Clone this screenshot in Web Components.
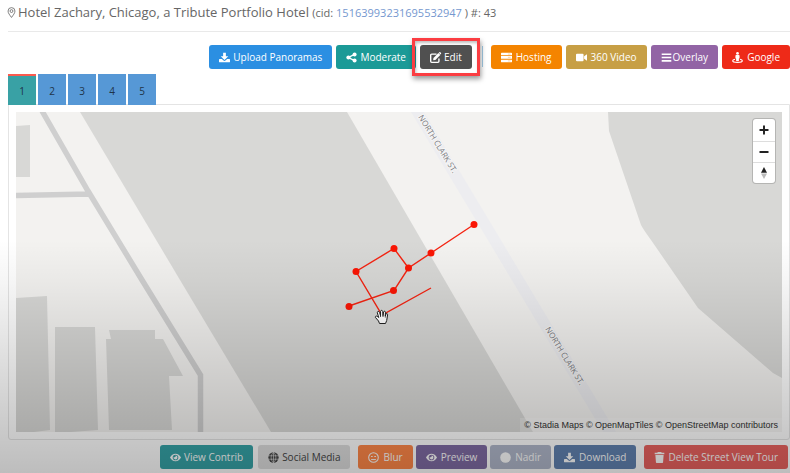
<!DOCTYPE html>
<html lang="en">
<head>
<meta charset="utf-8">
<title>Hotel Zachary tour editor</title>
<style>
html { height: 100%; }
body { margin: 0; min-height: 100%; background: #fff; font-family: "Open Sans", sans-serif; color: #555; overflow-x: hidden; }
</style>
</head>
<body>
<tour-editor></tour-editor>
<script>
const ICONS = {
  pin: '<path fill="none" stroke="currentColor" stroke-width="1.2" d="M8 15.2C5.4 11.6 3 9 3 5.900a5 5 0 0 1 10 0C13 9 10.600 11.600 8 15.200Z"/><circle cx="8" cy="5.900" r="2.100" fill="none" stroke="currentColor" stroke-width="1.200"/>',
  download: '<path d="M6 1h4v5h3.500L8 11.500 2.500 6H6Z"/><path d="M1 10h3.200L6.600 12.400a2 2 0 0 0 2.800 0L11.800 10H15a1 1 0 0 1 1 1v3a1 1 0 0 1-1 1H1a1 1 0 0 1-1-1v-3a1 1 0 0 1 1-1Z"/>',
  share: '<circle cx="3.500" cy="8" r="3"/><circle cx="12.500" cy="3.500" r="2.900"/><circle cx="12.500" cy="12.500" r="2.900"/><path d="M12.500 3.500 3.500 8l9 4.500" fill="none" stroke="currentColor" stroke-width="2"/>',
  edit: '<path d="M9.500 3H2.500A1.500 1.500 0 0 0 1 4.500v9A1.500 1.500 0 0 0 2.500 15h9a1.500 1.500 0 0 0 1.500-1.500V9.500" fill="none" stroke="currentColor" stroke-width="2"/><path d="M5 8.700 12.200 1.500l2.800 2.800-7.200 7.200L4.600 12Z"/><path d="m12.700 1 1-.7c.4-.3.900-.3 1.300.1l1 1c.4.4.4.900.1 1.300l-.7 1Z"/>',
  server: '<path d="M1 1h14a1 1 0 0 1 1 1v2.200H0V2a1 1 0 0 1 1-1ZM0 5.600h16v4.200H0ZM0 11.200h16V14a1 1 0 0 1-1 1H1a1 1 0 0 1-1-1Z"/><path d="M10 3h4M10 7.700h4M10 13h4" stroke="#f9c07a" stroke-width="1"/>',
  video: '<path d="M1.500 2.500h8A1.500 1.500 0 0 1 11 4v8a1.500 1.500 0 0 1-1.500 1.500h-8A1.500 1.500 0 0 1 0 12V4a1.500 1.500 0 0 1 1.500-1.500ZM11.800 6.300 16 3.200v9.600l-4.200-3.100Z"/>',
  bars: '<path d="M1 2h14v2.200H1ZM1 6.900h14v2.200H1ZM1 11.800h14V14H1Z"/>',
  street: '<circle cx="8" cy="2" r="2"/><path d="M6 4.500h4a1 1 0 0 1 1 1V9l-1 .7V13H6V9.700L5 9V5.500a1 1 0 0 1 1-1Z"/><path d="M4.500 10.600C2.500 11 1 11.700 1 12.600c0 1.400 3.100 2.400 7 2.400s7-1 7-2.400c0-.9-1.500-1.600-3.500-2" fill="none" stroke="currentColor" stroke-width="1.700"/>',
  eye: '<path fill-rule="evenodd" d="M8 2.500c3.400 0 6.300 2 8 5.500-1.700 3.500-4.600 5.500-8 5.500S1.700 11.500 0 8c1.700-3.500 4.600-5.500 8-5.500Zm0 1.400a4.100 4.100 0 1 0 0 8.200 4.100 4.100 0 0 0 0-8.200Z"/><path d="M8 5.200A2.800 2.800 0 1 1 5.400 7 1.500 1.500 0 0 0 8 5.200Z"/>',
  globe: '<circle cx="8" cy="8" r="7.500"/><path d="M0 5.500h16M0 10.500h16M8 0v16M8 .5C3.500 4 3.500 12 8 15.500 12.500 12 12.500 4 8 .5Z" fill="none" stroke="#d6d6d6" stroke-width="1"/>',
  meh: '<circle cx="8" cy="8" r="7" fill="none" stroke="currentColor" stroke-width="1.500"/><path d="M4.500 11h7" stroke="currentColor" stroke-width="1.400"/><path d="M4.500 5.700h2.300v1.600H4.500ZM9.200 5.700h2.300v1.600H9.200Z"/>',
  circle: '<circle cx="8" cy="8" r="7.700"/>',
  trash: '<path d="M5.500 0h5l.7 1H15v2.200H1V1h3.800ZM2 4.300h12L13.200 15a1 1 0 0 1-1 1H3.800a1 1 0 0 1-1-1Z"/>',
  plus: '<path d="M8 3v10M3 8h10" fill="none" stroke="currentColor" stroke-width="2.600" stroke-linecap="round"/>',
  minus: '<path d="M3 8h10" fill="none" stroke="currentColor" stroke-width="2.600" stroke-linecap="round"/>',
  compass: '<path d="M8 0 12 7.500H4Z"/><path d="M4 8.800h8L8 16Z" fill="#bbb"/>'
};

function define(name, html, setup) {
  const template = document.createElement('template');
  template.innerHTML = html;
  customElements.define(name, class extends HTMLElement {
    constructor() {
      super();
      this.attachShadow({ mode: 'open' }).append(template.content.cloneNode(true));
    }
    connectedCallback() { if (setup) setup(this, this.shadowRoot); }
  });
}

define('ui-icon', `
<style>
:host { display: inline-flex; flex: none; width: 11px; height: 11px; }
svg { width: 100%; height: 100%; fill: currentColor; overflow: visible; }
</style>
<svg viewBox="0 0 16 16" aria-hidden="true"></svg>`,
(host, root) => { root.querySelector('svg').innerHTML = ICONS[host.getAttribute('name')]; });

define('tool-button', `
<style>
:host { display: inline-flex; position: relative; color: #fff; }
button { display: flex; align-items: center; gap: var(--icon-gap, 4px); height: 24px; padding: 0 10px; border: 0; border-radius: 3px;
  background: var(--fill); color: inherit; font: 10px/24px "Open Sans", sans-serif; white-space: nowrap; cursor: pointer; }
:host([strong]) button { font-weight: 500; }
:host([tight]) button { gap: 1px; }
:host([marked])::after { content: ""; position: absolute; inset: -7px -8px; border: 3px solid #fb3d42;
  box-shadow: 1px 3px 5px rgba(0,0,0,.4), inset 1px 2px 3px rgba(0,0,0,.25); pointer-events: none; }
</style>
<button type="button"><ui-icon></ui-icon><span><slot></slot></span></button>`,
(host, root) => {
  const icon = document.createElement('ui-icon');
  icon.setAttribute('name', host.getAttribute('icon'));
  root.querySelector('ui-icon').replaceWith(icon);
});

define('tool-bar', `
<style>
:host { display: flex; justify-content: flex-end; gap: 8px; }
</style>
<slot></slot>`);

define('tool-group', `
<style>:host { display: flex; gap: var(--gap, 4px); }</style><slot></slot>`);

define('page-title', `
<style>
:host { display: block; border-bottom: 1px solid #e9e9e9; }
h1 { display: flex; align-items: center; gap: 1px; margin: 0; height: 31px; padding-bottom: 7px; box-sizing: border-box;
  font-size: 13px; line-height: 24px; font-weight: 400; color: #666; white-space: nowrap; }
small { font-size: 11px; }
a { color: #7598cf; text-decoration: none; }
ui-icon { margin-left: -2px; }
</style>
<h1><ui-icon name="pin"></ui-icon><span>Hotel Zachary, Chicago, a Tribute Portfolio Hotel <small>(cid: <a href="#cid">15163993231695532947</a> ) #: 43</small></span></h1>`);

define('floor-tabs', `
<style>
:host { display: flex; gap: 2px; position: relative; }
button { width: 28px; height: 31px; padding: 2px 0 0; border: 0; background: #5698d6; color: #1f3448; font: 10px "Open Sans", sans-serif; }
button[aria-selected=true] { background: #39a1a5; border-top: 2px solid #fb5a4e; padding: 0; }
</style>
<button type="button" role="tab" aria-selected="true">1</button>
<button type="button" role="tab">2</button>
<button type="button" role="tab">3</button>
<button type="button" role="tab">4</button>
<button type="button" role="tab">5</button>`);

define('map-controls', `
<style>
:host { display: flex; flex-direction: column; width: 22px; border-radius: 3px; background: #fff; box-shadow: 0 0 0 1px rgba(0,0,0,.16); }
button { display: grid; place-items: center; height: 22px; padding: 0; border: 0; background: none; color: #222; }
button + button { border-top: 1px solid #ddd; height: 21px; }
ui-icon { width: 12px; height: 12px; }
</style>
<button type="button" aria-label="Zoom in"><ui-icon name="plus"></ui-icon></button>
<button type="button" aria-label="Zoom out"><ui-icon name="minus"></ui-icon></button>
<button type="button" aria-label="Reset north"><ui-icon name="compass"></ui-icon></button>`);

define('tour-map', `
<style>
:host { display: block; position: relative; }
svg { display: block; width: 100%; height: auto; }
text { font: 8px "Open Sans", sans-serif; fill: #77777c; stroke: #f5f5f5; stroke-width: 2px; paint-order: stroke; }
map-controls { position: absolute; top: 7px; right: 7px; }
footer { position: absolute; right: 0; bottom: 0; padding: 0 4px; background: rgba(255,255,255,.25);
  font: 9px/14px "Liberation Sans", sans-serif; color: #333; white-space: nowrap; }
</style>
<svg viewBox="16 112 766 320" role="img" aria-label="Map of North Clark Street with tour path">
  <path fill="#f3f2f0" d="M16 112h766v320H16Z"/>
  <g fill="#d8d8d6">
    <path d="M80 112H347L533 432H271L180 280Z"/>
    <path d="M608 112L609 131 641 225Q643 229 651 240L698 308 773 373 782 378V112Z"/>
    <path d="M16 126L30 125V177H16Z"/>
    <path d="M16 298L47 296 50 430 34 432H16Z"/>
    <path d="M55 327H95L98 430 71 432H55Z"/>
    <path d="M109 330H155V339H163L183 376H169L172 430H109L106 339H111Z"/>
  </g>
  <path fill="none" stroke="#cfcfcf" stroke-width="5.500" d="M42 111L88 191 142 280 200.500 375V432M16 195.500L90 194"/>
  <path fill="#ededf0" d="M411 112H424L616 432H603Z"/>
  <text transform="translate(418 117) rotate(58.500)">NORTH CLARK ST.</text>
  <text transform="translate(545 329) rotate(58.500)">NORTH CLARK ST.</text>
  <path fill="none" stroke="#f42412" stroke-width="1.400" d="M349 306L394 290.500 408.500 268 431 253 474 224.500M408.500 268L394 248.500 356 271.500 382 315 431 288"/>
  <g fill="#fa1605">
    <circle cx="349" cy="306.500" r="3.500"/><circle cx="393.500" cy="290.500" r="3.500"/><circle cx="408.500" cy="268" r="3.500"/>
    <circle cx="431" cy="253" r="3.500"/><circle cx="474" cy="224.500" r="3.500"/><circle cx="394" cy="248.500" r="3.500"/><circle cx="356" cy="271.500" r="3.500"/>
  </g>
  <path fill="#fff" stroke="#222" stroke-width="1" stroke-linejoin="round" d="M379.500 323.500L378.500 321 375.300 317.300C375.300 315.600 377 315.600 378.700 317.500L377.300 312.700C377.300 311 379 311 379.600 312.500L380.500 315.500V311.500C380.800 310 382.400 310 382.700 311.500L383 315.500 383.600 312C384.100 310.700 385.500 311 385.500 312.500L385.300 316 386 314C386.600 313 387.800 313.500 387.600 314.800L386.700 320.500 385.500 323.500Z"/>
  <path stroke="#222" stroke-width=".8" d="M380.500 315v2M383 315v2M385.300 315.500v2"/>
</svg>
<map-controls></map-controls>
<footer>© Stadia Maps © OpenMapTiles © OpenStreetMap contributors</footer>`);

define('tour-editor', `
<style>
:host { display: block; position: relative; min-height: 100vh; box-sizing: border-box; padding-left: 8px; }
:host::after { content: ""; position: absolute; inset: 240px 0 0; pointer-events: none;
  background: linear-gradient(rgba(0,0,0,0), rgba(0,0,0,.04) 18%, rgba(0,0,0,.26)); }
.top { margin-top: 13px; }
.divider { width: 1px; height: 21px; margin: 1px 0 0 6px; background: #a3cbe5; }
floor-tabs { margin-top: 5px; }
main { padding: 7px; border: 1px solid #e4e4e4; border-radius: 0 0 3px 3px; margin-top: -1px; }
.bottom { margin: 5px 2px 4px 0; }
.grey { color: #444; }
.snug { --icon-gap: 3px; }
</style>
<page-title></page-title>
<tool-bar class="top">
  <tool-group class="snug">
    <tool-button icon="download" style="--fill:#2b8fe2">Upload Panoramas</tool-button>
    <tool-button icon="share" style="--fill:#1b9a97">Moderate</tool-button>
    <tool-button icon="edit" marked style="--fill:#505050">Edit</tool-button>
    <div class="divider"></div>
  </tool-group>
  <tool-group>
    <tool-button icon="server" style="--fill:#f48400">Hosting</tool-button>
    <tool-button icon="video" style="--fill:#c79f45">360 Video</tool-button>
    <tool-button icon="bars" tight style="--fill:#9264a5">Overlay</tool-button>
    <tool-button icon="street" style="--fill:#ee2a18">Google</tool-button>
  </tool-group>
</tool-bar>
<floor-tabs role="tablist"></floor-tabs>
<main><tour-map></tour-map></main>
<tool-bar class="bottom">
  <tool-group class="snug" style="--gap:5px">
    <tool-button icon="eye" style="--fill:#36a3a7">View Contrib</tool-button>
    <tool-button icon="globe" class="grey" style="--fill:#dedede">Social Media</tool-button>
  </tool-group>
  <tool-group style="--gap:3px">
    <tool-button icon="meh" strong style="--fill:#ff8748">Blur</tool-button>
    <tool-button icon="eye" strong style="--fill:#7f6ba3">Preview</tool-button>
    <tool-button icon="circle" style="--fill:#b0b7ca">Nadir</tool-button>
    <tool-button icon="download" strong style="--fill:#6182b0">Download</tool-button>
  </tool-group>
  <tool-button icon="trash" strong class="snug" style="--fill:#e9625f">Delete Street View Tour</tool-button>
</tool-bar>`);
</script>
</body>
</html>
